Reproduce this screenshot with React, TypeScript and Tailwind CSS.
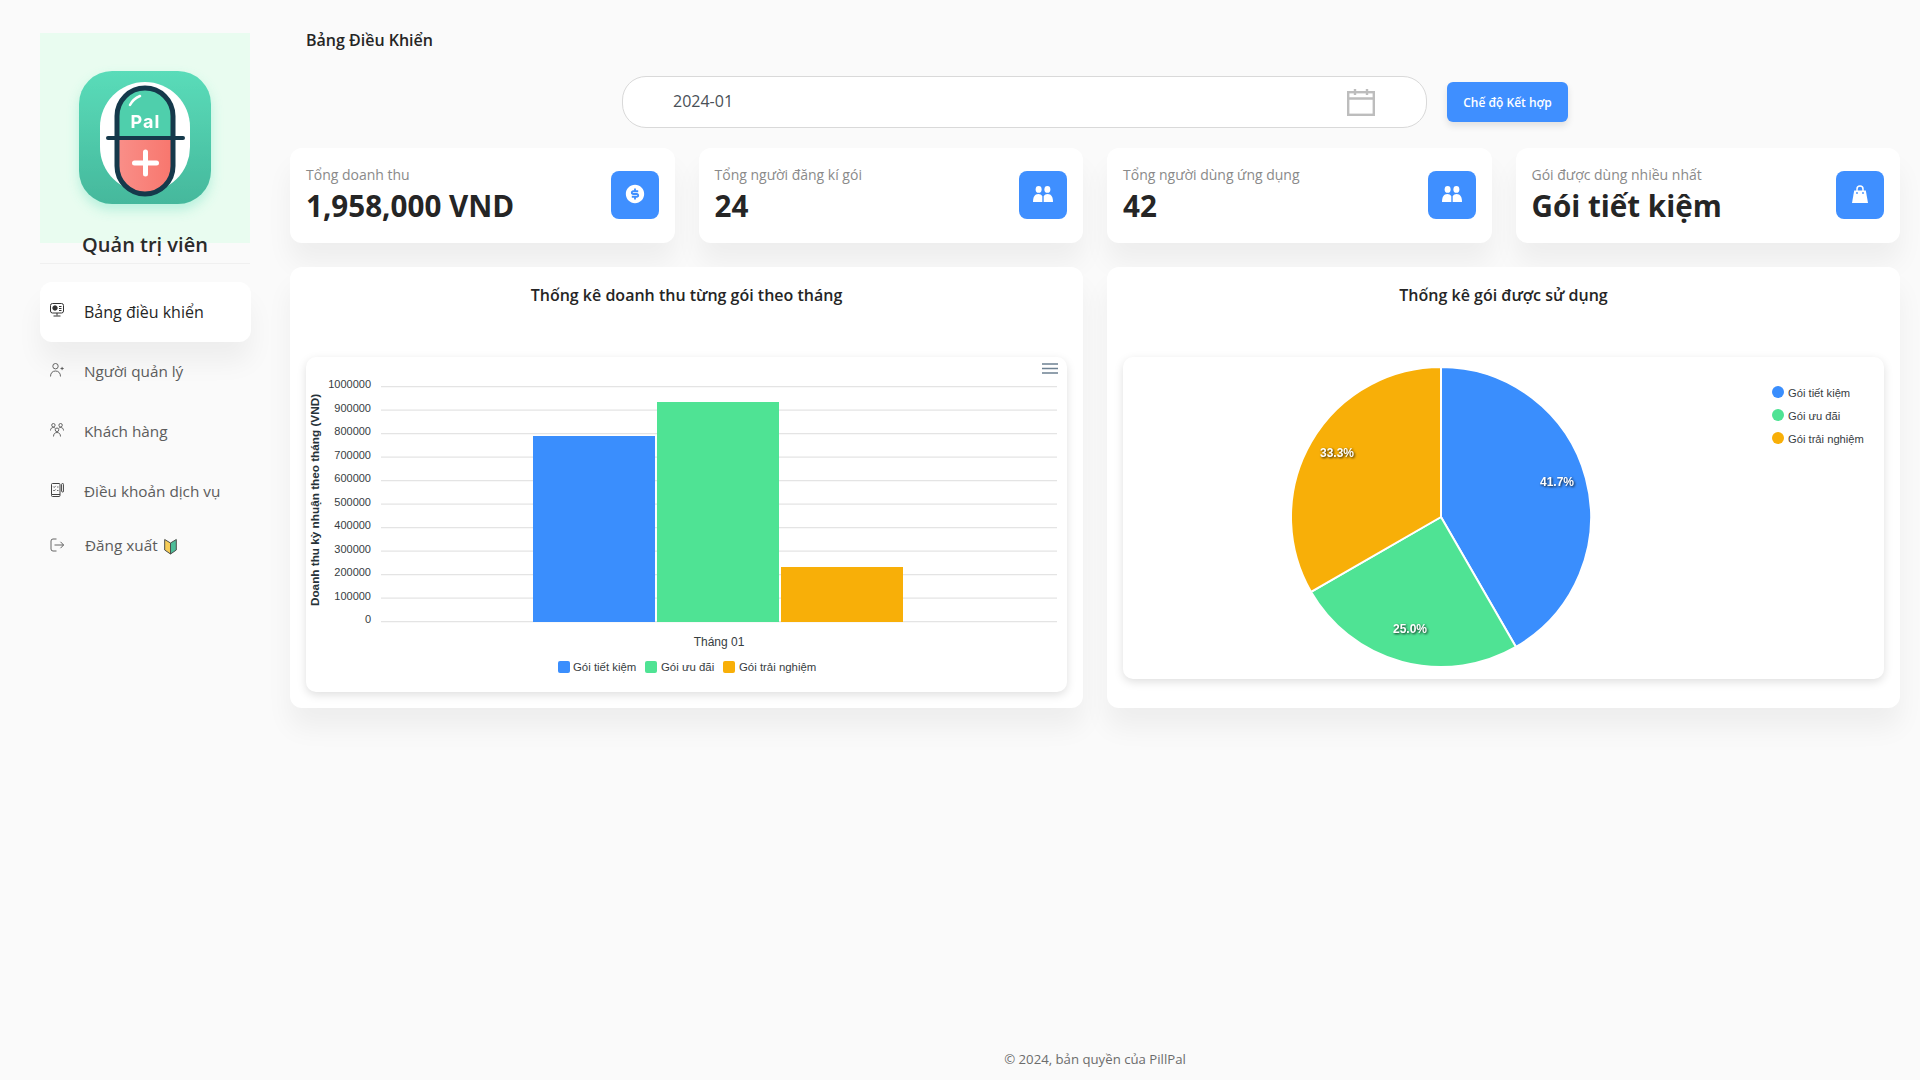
import { RiMoneyDollarCircleFill } from 'react-icons/ri';

const BLUE = '#3a8efd';
const GREEN = '#4fe394';
const ORANGE = '#f8af08';

function Logo() {
  return (
    <svg viewBox="0 0 210 210" className="w-[210px] h-[210px] blur-[0.4px]">
      <defs>
        <linearGradient id="tile" x1="0" y1="0" x2="0" y2="1">
          <stop offset="0" stopColor="#5adcb9" />
          <stop offset="1" stopColor="#45b89c" />
        </linearGradient>
        <linearGradient id="red" x1="0" y1="0" x2="1" y2="0">
          <stop offset="0" stopColor="#f98f89" />
          <stop offset="1" stopColor="#f8766d" />
        </linearGradient>
        <filter id="glow" x="-20%" y="-20%" width="140%" height="140%">
          <feDropShadow dx="0" dy="6" stdDeviation="6" floodColor="#5adcb9" floodOpacity="0.35" />
        </filter>
      </defs>
      <rect x="39" y="38" width="132" height="133" rx="33" fill="url(#tile)" filter="url(#glow)" />
      <rect x="60" y="49" width="90" height="110" rx="45" fill="#fff" />
      <path d="M77 105 V83 a28 28 0 0 1 56 0 V105 Z" fill="#4fcfac" />
      <path d="M77 105 H133 V133 a28 28 0 0 1 -56 0 Z" fill="url(#red)" />
      <rect x="77" y="55" width="56" height="106" rx="28" fill="none" stroke="#15394b" strokeWidth="5" />
      <path d="M68 105 H143" stroke="#15394b" strokeWidth="4" strokeLinecap="round" />
      <path d="M90 72 Q93 66 100 63" stroke="#fff" strokeWidth="2.5" fill="none" strokeLinecap="round" />
      <text x="105.5" y="95" textAnchor="middle" fill="#fff" fontSize="18" fontWeight="700" fontFamily="Inter, sans-serif" letterSpacing="1">Pal</text>
      <path d="M105.5 119 V141 M94.5 130 H116.5" stroke="#fff" strokeWidth="5" strokeLinecap="round" />
    </svg>
  );
}

function MonitorIcon() {
  return (
    <svg viewBox="0 0 14 14" className="w-[14px] h-[14px]" fill="none" stroke="#333" strokeWidth="1">
      <rect x="0.5" y="0.5" width="13" height="9.5" rx="2" />
      <circle cx="5" cy="5" r="2.2" fill="#333" />
      <path d="M9 3.5h2.5M9 5.5h2.5M9 7.5h2.5M7 10v2.5M3.5 13h7" />
    </svg>
  );
}

function UserPlusIcon() {
  return (
    <svg viewBox="0 0 14 14" className="w-[14px] h-[14px]" fill="none" stroke="#555" strokeWidth="0.9">
      <circle cx="5.5" cy="3.2" r="2.7" />
      <path d="M0.5 13.5c0-3.5 2-5.5 5-5.5s5 2 5 5.5M10.5 5.5h3.2M12.1 3.9v3.2" />
    </svg>
  );
}

function GroupIcon() {
  return (
    <svg viewBox="0 0 14 14" className="w-[14px] h-[14px]" fill="none" stroke="#555" strokeWidth="0.9">
      <circle cx="3.4" cy="2.2" r="1.7" />
      <circle cx="10.6" cy="2.2" r="1.7" />
      <circle cx="7" cy="6.8" r="1.8" />
      <path d="M0.5 7.5c0-2 1.2-3 2.9-3 0.7 0 1.2 0.2 1.7 0.5M13.5 7.5c0-2-1.2-3-2.9-3-0.7 0-1.2 0.2-1.7 0.5M3.5 13.5c0-2.6 1.4-4 3.5-4s3.5 1.4 3.5 4" />
    </svg>
  );
}

function TermsIcon() {
  return (
    <svg viewBox="0 0 14 14" className="w-[14px] h-[14px]" fill="none" stroke="#444" strokeWidth="1">
      <path d="M1.5 11.5V1.5a1 1 0 0 1 1-1h6.5a1 1 0 0 1 1 1v11a1 1 0 0 1-1 1H2.5a1 1 0 0 1-1-1v-1h8.5" />
      <path d="M3.2 3.5l1 1 1.5-1.6M3.2 7l1 1 1.5-1.6M7 4h1.5M7 7.5h1.5" strokeWidth="0.8" />
      <rect x="11.6" y="0.5" width="2" height="8.5" rx="1" />
    </svg>
  );
}

function LogoutIcon() {
  return (
    <svg viewBox="0 0 14 14" className="w-[14px] h-[14px]" fill="none" stroke="#555" strokeWidth="0.9">
      <path d="M6.5 1H3a2 2 0 0 0-2 2v8a2 2 0 0 0 2 2h3.5M4.5 7h9M10.5 3.8L13.6 7l-3.1 3.2" />
    </svg>
  );
}

function BeginnerMark() {
  return (
    <svg viewBox="0 0 13 17" className="w-[13px] h-[17px] ml-[6px]">
      <path d="M0.7 1.5 L6.5 5 V16 L0.7 12 Z" fill="#f7cd58" stroke="#4a4f4c" strokeWidth="1" strokeLinejoin="round" />
      <path d="M12.3 1.5 L6.5 5 V16 L12.3 12 Z" fill="#4cbc98" stroke="#4a4f4c" strokeWidth="1" strokeLinejoin="round" />
    </svg>
  );
}

function PeopleIcon() {
  return (
    <svg viewBox="0 0 20 16" className="w-5 h-4" fill="#fff">
      <ellipse cx="5.6" cy="3.4" rx="3" ry="3.4" />
      <ellipse cx="14.4" cy="3.4" rx="3" ry="3.4" />
      <path d="M0 16c0-5 1.6-8 5.4-8 1.7 0 3 .7 3.9 2.2V16Z" />
      <path d="M20 16c0-5-1.6-8-5.4-8-1.7 0-3 .7-3.9 2.2V16Z" />
    </svg>
  );
}

function BagIcon() {
  return (
    <svg viewBox="0 0 16 18" className="w-4 h-[18px]">
      <path d="M2.2 5.5h11.6L16 18H0Z" fill="#fff" />
      <path d="M5 7V4a3 3 0 0 1 6 0v3" fill="none" stroke="#fff" strokeWidth="1.5" />
      <circle cx="5" cy="8" r="0.9" fill="#3f8fff" />
      <circle cx="11" cy="8" r="0.9" fill="#3f8fff" />
    </svg>
  );
}

function NavItem({ icon, label, active }: { icon: React.ReactNode; label: string; active?: boolean }) {
  return (
    <div className={`flex items-center h-[60px] pl-[10px] -mr-px rounded-xl ${active ? 'bg-white shadow-[0_20px_27px_0_rgba(0,0,0,0.05)] text-[#252525]' : 'text-[#5c5c5c]'}`}>
      <span className="w-[34px] mb-[4px] shrink-0">{icon}</span>
      <span className={active ? 'text-base' : 'text-[15.3px] mb-px'}>{label}</span>
    </div>
  );
}

function StatCard({ label, value, icon }: { label: string; value: string; icon: React.ReactNode }) {
  return (
    <div className="h-[95px] bg-white rounded-xl shadow-[0_20px_27px_0_rgba(0,0,0,0.05)] px-4 flex items-center justify-between">
      <div className="pb-[2px]">
        <div className="text-sm leading-5 mb-[2px] text-[#8a8a8a]">{label}</div>
        <div className="text-[29.6px] leading-[38px] font-bold text-[#252525]">{value}</div>
      </div>
      <div className="w-12 h-12 mb-[2px] pb-[2px] rounded-lg bg-[#3f8fff] flex items-center justify-center">{icon}</div>
    </div>
  );
}

const ticks = [1000000, 900000, 800000, 700000, 600000, 500000, 400000, 300000, 200000, 100000, 0];
const chartFont = '"Liberation Sans", Arial, sans-serif';

function BarChart() {
  return (
    <svg viewBox="0 0 761 335" className="w-[761px] h-[335px]" fontFamily={chartFont}>
      {ticks.map((t, i) => {
        const y = 29.7 + i * 23.5;
        return (
          <g key={t}>
            <line x1="75" x2="751" y1={y} y2={y} stroke="#e4e4e4" strokeWidth="1.2" />
            <text x="65" y={y + 1.5} textAnchor="end" fontSize="11" fill="#373d3f">{t}</text>
          </g>
        );
      })}
      <rect x="227" y="79" width="122" height="186" fill={BLUE} />
      <rect x="351" y="45" width="122" height="220" fill={GREEN} />
      <rect x="475" y="210" width="122" height="55" fill={ORANGE} />
      <text transform="translate(13 143) rotate(-90)" textAnchor="middle" fontSize="11.75" fontWeight="700" fill="#263238">
        Doanh thu kỳ nhuận theo tháng (VND)
      </text>
      <text x="413" y="289" textAnchor="middle" fontSize="12" fill="#373d3f">Tháng 01</text>
      <rect x="252" y="304" width="12" height="12" rx="2" fill={BLUE} />
      <text x="267" y="314" fontSize="11.4" fill="#373d3f">Gói tiết kiệm</text>
      <rect x="339" y="304" width="12" height="12" rx="2" fill={GREEN} />
      <text x="355" y="314" fontSize="11.4" fill="#373d3f">Gói ưu đãi</text>
      <rect x="417" y="304" width="12" height="12" rx="2" fill={ORANGE} />
      <text x="433" y="314" fontSize="11.4" fill="#373d3f">Gói trải nghiệm</text>
      <path d="M736 7h16M736 11.5h16M736 16h16" stroke="#6e8192" strokeWidth="1.6" />
    </svg>
  );
}

function slice(from: number, to: number) {
  const cx = 318;
  const cy = 160;
  const r = 150;
  const a = (from / 100) * 2 * Math.PI;
  const b = (to / 100) * 2 * Math.PI;
  const large = to - from > 50 ? 1 : 0;
  return `M${cx} ${cy}L${cx + r * Math.sin(a)} ${cy - r * Math.cos(a)}A${r} ${r} 0 ${large} 1 ${cx + r * Math.sin(b)} ${cy - r * Math.cos(b)}Z`;
}

function PieChart() {
  const labelClass = 'drop-shadow-[1px_1px_1px_rgba(0,0,0,0.8)]';
  return (
    <svg viewBox="0 0 761 322" className="w-[761px] h-[322px]" fontFamily={chartFont}>
      <path d={slice(0, 41.67)} fill={BLUE} stroke="#fff" strokeWidth="2" />
      <path d={slice(41.67, 66.67)} fill={GREEN} stroke="#fff" strokeWidth="2" />
      <path d={slice(66.67, 100)} fill={ORANGE} stroke="#fff" strokeWidth="2" />
      <text x="434" y="129" textAnchor="middle" fontSize="12" fontWeight="700" fill="#fff" className={labelClass}>41.7%</text>
      <text x="287" y="276" textAnchor="middle" fontSize="12" fontWeight="700" fill="#fff" className={labelClass}>25.0%</text>
      <text x="214" y="100" textAnchor="middle" fontSize="12" fontWeight="700" fill="#fff" className={labelClass}>33.3%</text>
      <circle cx="655" cy="35" r="6" fill={BLUE} />
      <text x="665" y="40" fontSize="11.2" fill="#373d3f">Gói tiết kiệm</text>
      <circle cx="655" cy="58" r="6" fill={GREEN} />
      <text x="665" y="63" fontSize="11.2" fill="#373d3f">Gói ưu đãi</text>
      <circle cx="655" cy="81" r="6" fill={ORANGE} />
      <text x="665" y="86" fontSize="11.2" fill="#373d3f">Gói trải nghiệm</text>
    </svg>
  );
}

function ChartCard({ title, children }: { title: string; children: React.ReactNode }) {
  return (
    <div className="h-[441px] bg-white rounded-xl shadow-[0_20px_27px_0_rgba(0,0,0,0.05)] px-4 pt-4">
      <h3 className="text-base leading-6 font-semibold text-center text-[#252525]">{title}</h3>
      <div className="mt-[50px] bg-white rounded-[10px] shadow-[0_3px_10px_rgba(0,0,0,0.13)]">{children}</div>
    </div>
  );
}

export default function App() {
  return (
    <div className="flex min-h-screen bg-[#fafafa] font-['Open_Sans',sans-serif]">
      <aside className="w-[290px] shrink-0 pt-[33px] px-10">
        <div className="bg-[#e9fcf0]">
          <Logo />
        </div>
        <h2 className="-mt-[12px] text-xl leading-7 font-semibold text-center text-[#2b2b2b] relative">Quản trị viên</h2>
        <div className="mt-[4px] h-px bg-[#f0f0f0]" />
        <nav className="mt-[18px]">
          <NavItem active icon={<MonitorIcon />} label="Bảng điều khiển" />
          <NavItem icon={<UserPlusIcon />} label="Người quản lý" />
          <NavItem icon={<GroupIcon />} label="Khách hàng" />
          <NavItem icon={<TermsIcon />} label="Điều khoản dịch vụ" />
          <div className="flex items-center h-[48px] pl-[10px] text-[#5c5c5c]">
            <span className="w-[35px] mb-[2px] shrink-0"><LogoutIcon /></span>
            <span className="text-[15.3px] mb-px">Đăng xuất</span>
            <BeginnerMark />
          </div>
        </nav>
      </aside>

      <main className="flex-1 pr-5 flex flex-col pt-7">
        <h1 className="pl-4 text-base leading-6 font-semibold text-[#252525]">Bảng Điều Khiển</h1>
        <div className="mt-6 flex items-center justify-center gap-5">
          <div className="w-[805px] h-[52px] bg-white border border-[#d9d9d9] rounded-3xl pl-[50px] pr-[51px] flex items-center justify-between">
            <span className="text-base mb-[2px] text-[#495057]">2024-01</span>
            <svg viewBox="0 0 28 27" className="w-7 h-[27px]" fill="none" stroke="#bdbdbd" strokeWidth="2.4">
              <rect x="1.2" y="3.2" width="25.6" height="22.6" />
              <path d="M1.2 9.5h25.6M8 0v6M20 0v6" />
            </svg>
          </div>
          <button className="w-[121px] h-10 pt-px bg-[#3f8fff] rounded-md text-xs font-semibold text-white shadow-[0_4px_7px_rgba(0,0,0,0.1)]">
            Chế độ Kết hợp
          </button>
        </div>

        <div className="mt-5 grid grid-cols-4 gap-6">
          <StatCard label="Tổng doanh thu" value="1,958,000 VND" icon={<RiMoneyDollarCircleFill className="w-[22px] h-[22px] text-white" />} />
          <StatCard label="Tổng người đăng kí gói" value="24" icon={<PeopleIcon />} />
          <StatCard label="Tổng người dùng ứng dụng" value="42" icon={<PeopleIcon />} />
          <StatCard label="Gói được dùng nhiều nhất" value="Gói tiết kiệm" icon={<BagIcon />} />
        </div>

        <div className="mt-6 grid grid-cols-2 gap-6">
          <ChartCard title="Thống kê doanh thu từng gói theo tháng"><BarChart /></ChartCard>
          <ChartCard title="Thống kê gói được sử dụng"><PieChart /></ChartCard>
        </div>

        <footer className="mt-auto pb-[11px] text-center text-[13.2px] leading-5 text-[#6c6c6c]">© 2024, bản quyền của PillPal</footer>
      </main>
    </div>
  );
}
